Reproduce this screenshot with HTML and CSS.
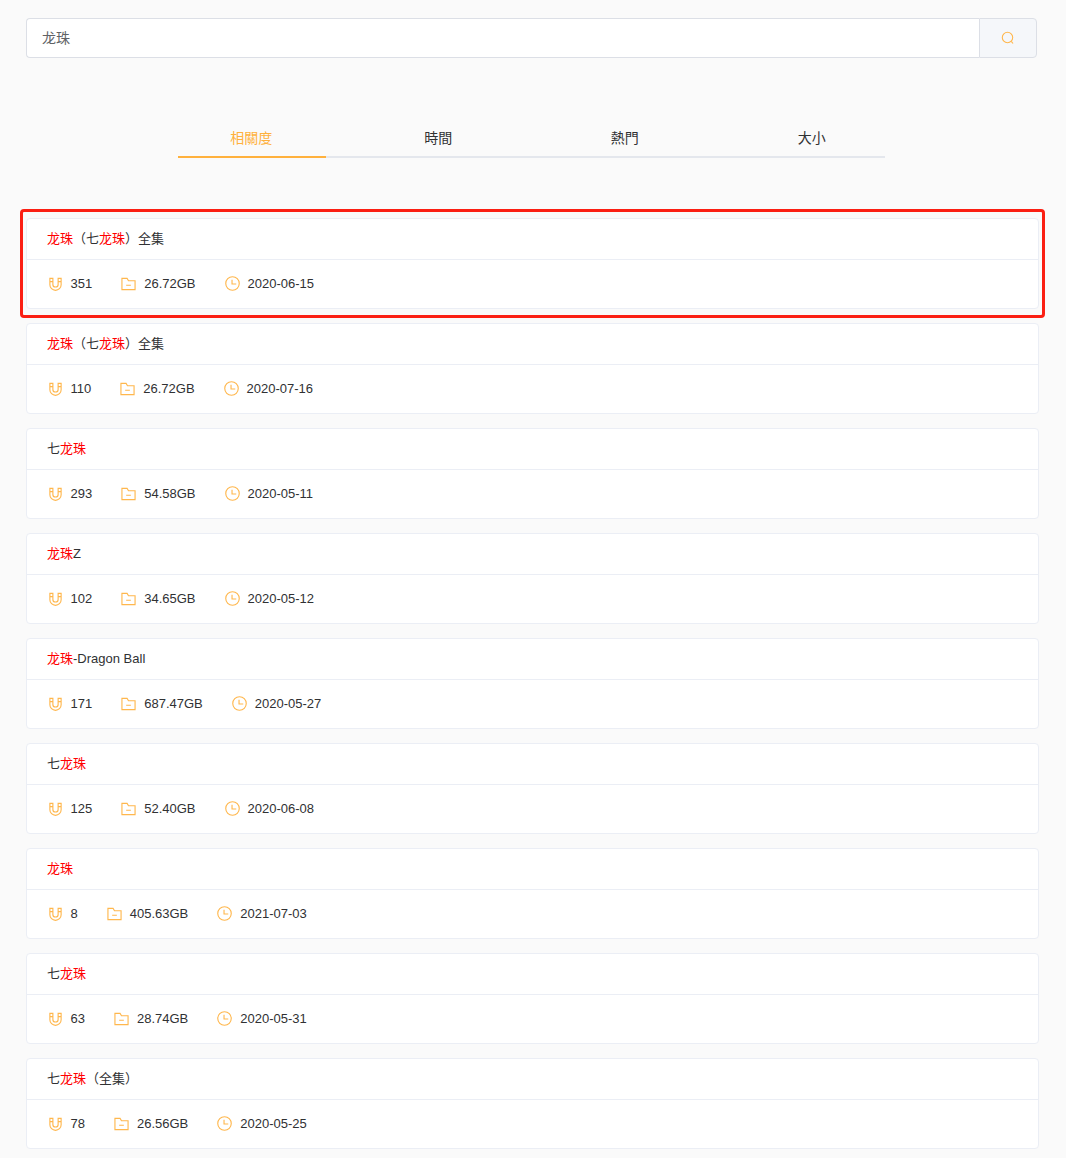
FILE: index.html
```html
<!DOCTYPE html>
<html lang="zh">
<head>
<meta charset="utf-8">
<title>龙珠</title>
<link rel="stylesheet" href="styles.css">
</head>
<body>
<svg class="defs" width="0" height="0" aria-hidden="true">
  <symbol id="i-mag" viewBox="0 0 16 16"><path d="M2 2.500h3.200v6.500a2.800 2.800 0 0 0 5.600 0V2.500h3.200v6.800a6 6 0 0 1-12 0Z M2 6h3.200 M10.800 6h3.200" fill="none" stroke="currentColor" stroke-width="1.200"/></symbol>
  <symbol id="i-folder" viewBox="0 0 16 16"><path d="M1 2.500h5.500l1.500 2.500h7v9.500H1Z M5.500 9.800h5" fill="none" stroke="currentColor" stroke-width="1.200"/></symbol>
  <symbol id="i-clock" viewBox="0 0 16 16"><circle cx="8" cy="8" r="7.200" fill="none" stroke="currentColor" stroke-width="1.200"/><path d="M7.500 4V8.500H12" fill="none" stroke="currentColor" stroke-width="1.200"/></symbol>
</svg>
<main class="page">
  <form class="search">
    <div class="search-input">龙珠</div>
    <button class="search-btn" type="button" aria-label="search">
      <svg class="search-icon" viewBox="0 0 14 14"><circle cx="6.500" cy="6.500" r="5.200" fill="none" stroke="currentColor" stroke-width="1.100"/><path d="M10.300 10.300 12 12.500" fill="none" stroke="currentColor" stroke-width="1.100"/></svg>
    </button>
  </form>

  <nav class="tabs">
    <a class="tab active">相關度</a>
    <a class="tab">時間</a>
    <a class="tab">熱門</a>
    <a class="tab">大小</a>
  </nav>

  <section class="list">
    <div class="highlight"></div>

    <article class="card">
      <h3 class="title"><em>龙珠</em>（七<em>龙珠</em>）全集</h3>
      <div class="meta">
        <span class="stat"><svg class="icon"><use href="#i-mag"/></svg>351</span>
        <span class="stat"><svg class="icon"><use href="#i-folder"/></svg>26.72GB</span>
        <span class="stat"><svg class="icon"><use href="#i-clock"/></svg>2020-06-15</span>
      </div>
    </article>

    <article class="card">
      <h3 class="title"><em>龙珠</em>（七<em>龙珠</em>）全集</h3>
      <div class="meta">
        <span class="stat"><svg class="icon"><use href="#i-mag"/></svg>110</span>
        <span class="stat"><svg class="icon"><use href="#i-folder"/></svg>26.72GB</span>
        <span class="stat"><svg class="icon"><use href="#i-clock"/></svg>2020-07-16</span>
      </div>
    </article>

    <article class="card">
      <h3 class="title">七<em>龙珠</em></h3>
      <div class="meta">
        <span class="stat"><svg class="icon"><use href="#i-mag"/></svg>293</span>
        <span class="stat"><svg class="icon"><use href="#i-folder"/></svg>54.58GB</span>
        <span class="stat"><svg class="icon"><use href="#i-clock"/></svg>2020-05-11</span>
      </div>
    </article>

    <article class="card">
      <h3 class="title"><em>龙珠</em>Z</h3>
      <div class="meta">
        <span class="stat"><svg class="icon"><use href="#i-mag"/></svg>102</span>
        <span class="stat"><svg class="icon"><use href="#i-folder"/></svg>34.65GB</span>
        <span class="stat"><svg class="icon"><use href="#i-clock"/></svg>2020-05-12</span>
      </div>
    </article>

    <article class="card">
      <h3 class="title"><em>龙珠</em>-Dragon Ball</h3>
      <div class="meta">
        <span class="stat"><svg class="icon"><use href="#i-mag"/></svg>171</span>
        <span class="stat"><svg class="icon"><use href="#i-folder"/></svg>687.47GB</span>
        <span class="stat"><svg class="icon"><use href="#i-clock"/></svg>2020-05-27</span>
      </div>
    </article>

    <article class="card">
      <h3 class="title">七<em>龙珠</em></h3>
      <div class="meta">
        <span class="stat"><svg class="icon"><use href="#i-mag"/></svg>125</span>
        <span class="stat"><svg class="icon"><use href="#i-folder"/></svg>52.40GB</span>
        <span class="stat"><svg class="icon"><use href="#i-clock"/></svg>2020-06-08</span>
      </div>
    </article>

    <article class="card">
      <h3 class="title"><em>龙珠</em></h3>
      <div class="meta">
        <span class="stat"><svg class="icon"><use href="#i-mag"/></svg>8</span>
        <span class="stat"><svg class="icon"><use href="#i-folder"/></svg>405.63GB</span>
        <span class="stat"><svg class="icon"><use href="#i-clock"/></svg>2021-07-03</span>
      </div>
    </article>

    <article class="card">
      <h3 class="title">七<em>龙珠</em></h3>
      <div class="meta">
        <span class="stat"><svg class="icon"><use href="#i-mag"/></svg>63</span>
        <span class="stat"><svg class="icon"><use href="#i-folder"/></svg>28.74GB</span>
        <span class="stat"><svg class="icon"><use href="#i-clock"/></svg>2020-05-31</span>
      </div>
    </article>

    <article class="card">
      <h3 class="title">七<em>龙珠</em>（全集）</h3>
      <div class="meta">
        <span class="stat"><svg class="icon"><use href="#i-mag"/></svg>78</span>
        <span class="stat"><svg class="icon"><use href="#i-folder"/></svg>26.56GB</span>
        <span class="stat"><svg class="icon"><use href="#i-clock"/></svg>2020-05-25</span>
      </div>
    </article>
  </section>
</main>
</body>
</html>
```
FILE: styles.css
```css
* { box-sizing: border-box; }

html, body {
  margin: 0;
  background: #fafafa;
}

body {
  font-family: "Liberation Sans", "Noto Sans CJK SC", sans-serif;
  font-size: 14px;
  color: #303133;
}

.defs { display: block; height: 0; }

.page {
  padding: 18px 27px 0 26px;
}

/* search */
.search {
  display: flex;
  width: 1011px;
  height: 40px;
}

.search-input {
  flex: 1;
  display: flex;
  align-items: center;
  padding: 0 15px 2px;
  background: #fff;
  border: 1px solid #dcdfe6;
  border-right: 0;
  border-radius: 4px 0 0 4px;
  color: #606266;
}

.search-btn {
  width: 58px;
  padding: 0;
  display: flex;
  align-items: center;
  justify-content: center;
  background: #f5f7fa;
  border: 1px solid #dcdfe6;
  border-radius: 0 4px 4px 0;
  color: #ffb74d;
}

.search-icon { width: 14px; height: 14px; }

/* tabs */
.tabs {
  display: flex;
  gap: 39px;
  width: 707px;
  height: 40px;
  margin: 60px 0 0 152px;
  border-bottom: 2px solid #e4e7ed;
  font-family: "Liberation Sans", "Noto Sans CJK TC", sans-serif;
}

.tab {
  width: 148px;
  height: 40px;
  line-height: 40px;
  text-align: center;
  color: #303133;
}

.tab:first-child { padding-right: 1px; }
.tab:last-child { padding-left: 1px; }

.tab.active {
  color: #ffb13d;
  border-bottom: 2px solid #ffb13d;
}

/* results */
.list {
  position: relative;
  margin-top: 60px;
}

.highlight {
  position: absolute;
  left: -6px;
  top: -9px;
  width: 1025px;
  height: 109px;
  border: 3px solid #fb1f13;
  border-radius: 4px;
  pointer-events: none;
}

.card {
  width: 1013px;
  height: 91px;
  margin-bottom: 14px;
  background: #fff;
  border: 1px solid #ebeef5;
  border-radius: 4px;
}

.title {
  height: 41px;
  margin: 0;
  padding: 0 20px;
  font-size: 13px;
  font-weight: 400;
  line-height: 39px;
  border-bottom: 1px solid #ebeef5;
}

.title em {
  font-style: normal;
  color: #f00;
}

.meta {
  display: flex;
  gap: 28.5px;
  height: 49px;
  padding: 0 20px 3px;
  align-items: center;
  font-size: 13px;
}

.stat {
  display: flex;
  align-items: center;
  color: #303133;
}

.icon {
  width: 15px;
  height: 15px;
  margin-left: 0.5px;
  margin-right: 8px;
  color: #ffb74d;
}
```
